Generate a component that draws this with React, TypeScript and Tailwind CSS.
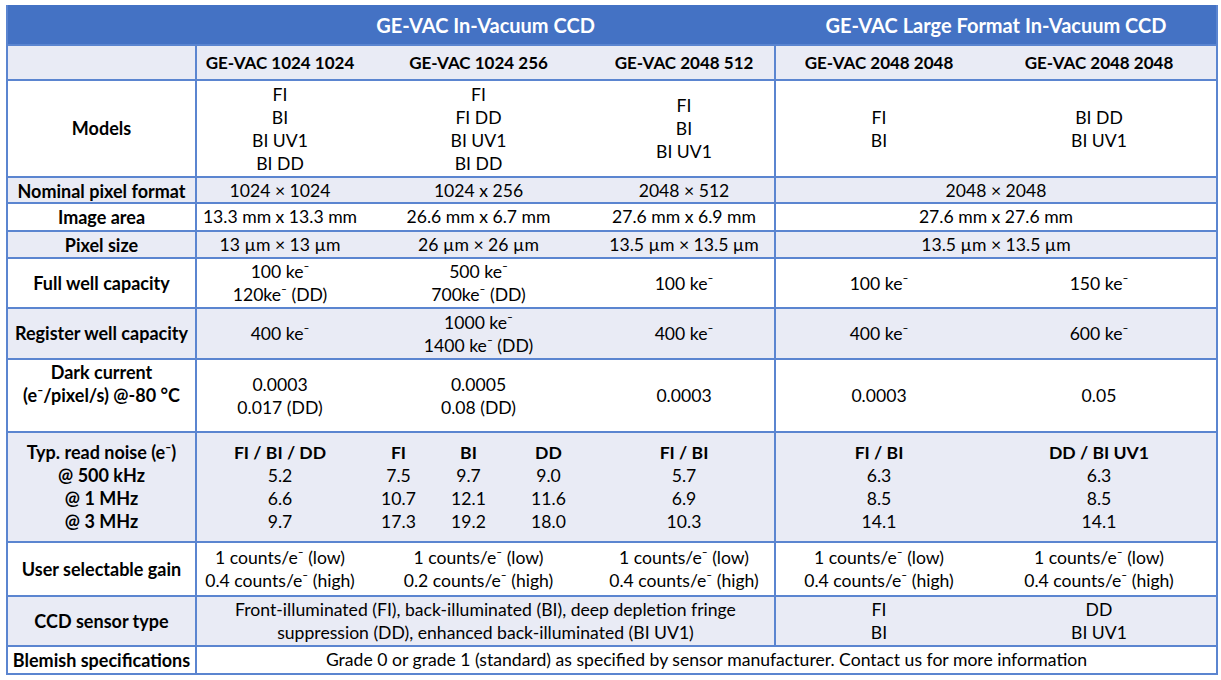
import React from "react";

const ROW =
  "grid grid-cols-[189px_166px_71px_69px_91px_182px_206px_234px] border-b-2 border-[#5b85d0]";
const CELL = "flex flex-col items-center justify-center text-center";
const LABEL =
  "flex flex-col items-center justify-center text-center font-bold text-[18px] border-r-2 border-[#5b85d0]";
const LIGHT = "bg-[#e9ebf5]";
const WHITE = "bg-white";

function M({ children }: { children: React.ReactNode }) {
  return <span>{children}</span>;
}

const E = "⁻";

function Lines({ items }: { items: React.ReactNode[] }) {
  return (
    <>
      {items.map((t, i) => (
        <div key={i} className="leading-[23px] whitespace-nowrap">
          {t}
        </div>
      ))}
    </>
  );
}

export default function App() {
  return (
    <div
      className="bg-white w-[1221px] h-[680px] pt-[5px] pl-[6px] text-black text-[17.6px]"
      style={{ fontFamily: "Lato, 'Liberation Sans', sans-serif" }}
    >
      <div className="w-[1212px] border-x-2 border-[#5b85d0]">
        {/* Header */}
        <div className={ROW + " h-[41px] bg-[#4472c4] text-white font-bold text-[20px]"}>
          <div className="border-r-2 border-[#4472c4]"></div>
          <div className={CELL + " col-span-5 border-r-2 border-[#4472c4]"}>GE-VAC In-Vacuum CCD</div>
          <div className={CELL + " col-span-2"}>GE-VAC Large Format In-Vacuum CCD</div>
        </div>
        {/* Subheader */}
        <div className={ROW + " h-[35px] font-bold text-[17px] " + LIGHT}>
          <div className={LABEL}></div>
          <div className={CELL}>GE-VAC 1024 1024</div>
          <div className={CELL + " col-span-3"}>GE-VAC 1024 256</div>
          <div className={CELL + " border-r-2 border-[#5b85d0]"}>GE-VAC 2048 512</div>
          <div className={CELL}>GE-VAC 2048 2048</div>
          <div className={CELL}>GE-VAC 2048 2048</div>
        </div>
        {/* Models */}
        <div className={ROW + " h-[97px] " + WHITE}>
          <div className={LABEL}>Models</div>
          <div className={CELL}>
            <Lines items={["FI", "BI", "BI UV1", "BI DD"]} />
          </div>
          <div className={CELL + " col-span-3"}>
            <Lines items={["FI", "FI DD", "BI UV1", "BI DD"]} />
          </div>
          <div className={CELL + " border-r-2 border-[#5b85d0]"}>
            <Lines items={["FI", "BI", "BI UV1"]} />
          </div>
          <div className={CELL}>
            <Lines items={["FI", "BI"]} />
          </div>
          <div className={CELL}>
            <Lines items={["BI DD", "BI UV1"]} />
          </div>
        </div>
        {/* Nominal pixel format */}
        <div className={ROW + " h-[26px] " + LIGHT}>
          <div className={LABEL}>Nominal pixel format</div>
          <div className={CELL}>1024 × 1024</div>
          <div className={CELL + " col-span-3"}>1024 x 256</div>
          <div className={CELL + " border-r-2 border-[#5b85d0]"}>2048 × 512</div>
          <div className={CELL + " col-span-2"}>2048 × 2048</div>
        </div>
        {/* Image area */}
        <div className={ROW + " h-[28px] " + WHITE}>
          <div className={LABEL}>Image area</div>
          <div className={CELL}>13.3 mm x 13.3 mm</div>
          <div className={CELL + " col-span-3"}>26.6 mm x 6.7 mm</div>
          <div className={CELL + " border-r-2 border-[#5b85d0]"}>27.6 mm x 6.9 mm</div>
          <div className={CELL + " col-span-2"}>27.6 mm x 27.6 mm</div>
        </div>
        {/* Pixel size */}
        <div className={ROW + " h-[27px] " + LIGHT}>
          <div className={LABEL}>Pixel size</div>
          <div className={CELL}>13 µm × 13 µm</div>
          <div className={CELL + " col-span-3"}>26 µm × 26 µm</div>
          <div className={CELL + " border-r-2 border-[#5b85d0]"}>13.5 µm × 13.5 µm</div>
          <div className={CELL + " col-span-2"}>13.5 µm × 13.5 µm</div>
        </div>
        {/* Full well capacity */}
        <div className={ROW + " h-[50px] " + WHITE}>
          <div className={LABEL}>Full well capacity</div>
          <div className={CELL}>
            <Lines items={[<M>100 ke{E}</M>, <M>120ke{E} (DD)</M>]} />
          </div>
          <div className={CELL + " col-span-3"}>
            <Lines items={[<M>500 ke{E}</M>, <M>700ke{E} (DD)</M>]} />
          </div>
          <div className={CELL + " border-r-2 border-[#5b85d0]"}>
            <Lines items={[<M>100 ke{E}</M>]} />
          </div>
          <div className={CELL}>
            <Lines items={[<M>100 ke{E}</M>]} />
          </div>
          <div className={CELL}>
            <Lines items={[<M>150 ke{E}</M>]} />
          </div>
        </div>
        {/* Register well capacity */}
        <div className={ROW + " h-[51px] " + LIGHT}>
          <div className={LABEL}>Register well capacity</div>
          <div className={CELL}>
            <Lines items={[<M>400 ke{E}</M>]} />
          </div>
          <div className={CELL + " col-span-3"}>
            <Lines items={[<M>1000 ke{E}</M>, <M>1400 ke{E} (DD)</M>]} />
          </div>
          <div className={CELL + " border-r-2 border-[#5b85d0]"}>
            <Lines items={[<M>400 ke{E}</M>]} />
          </div>
          <div className={CELL}>
            <Lines items={[<M>400 ke{E}</M>]} />
          </div>
          <div className={CELL}>
            <Lines items={[<M>600 ke{E}</M>]} />
          </div>
        </div>
        {/* Dark current */}
        <div className={ROW + " h-[73px] " + WHITE}>
          <div className="flex flex-col items-center justify-start pt-[1px] text-center font-bold text-[18px] border-r-2 border-[#5b85d0]">
            <Lines items={["Dark current", <M>(e{E}/pixel/s) @-80 °C</M>]} />
          </div>
          <div className={CELL}>
            <Lines items={["0.0003", "0.017 (DD)"]} />
          </div>
          <div className={CELL + " col-span-3"}>
            <Lines items={["0.0005", "0.08 (DD)"]} />
          </div>
          <div className={CELL + " border-r-2 border-[#5b85d0]"}>
            <Lines items={["0.0003"]} />
          </div>
          <div className={CELL}>
            <Lines items={["0.0003"]} />
          </div>
          <div className={CELL}>
            <Lines items={["0.05"]} />
          </div>
        </div>
        {/* Read noise */}
        <div className={ROW + " h-[110px] " + LIGHT}>
          <div className={LABEL}>
            <Lines items={[<M>Typ. read noise (e{E})</M>, "@ 500 kHz", "@ 1 MHz", "@ 3 MHz"]} />
          </div>
          <div className={CELL}>
            <Lines items={[<b>FI / BI / DD</b>, "5.2", "6.6", "9.7"]} />
          </div>
          <div className={CELL}>
            <Lines items={[<b>FI</b>, "7.5", "10.7", "17.3"]} />
          </div>
          <div className={CELL}>
            <Lines items={[<b>BI</b>, "9.7", "12.1", "19.2"]} />
          </div>
          <div className={CELL}>
            <Lines items={[<b>DD</b>, "9.0", "11.6", "18.0"]} />
          </div>
          <div className={CELL + " border-r-2 border-[#5b85d0]"}>
            <Lines items={[<b>FI / BI</b>, "5.7", "6.9", "10.3"]} />
          </div>
          <div className={CELL}>
            <Lines items={[<b>FI / BI</b>, "6.3", "8.5", "14.1"]} />
          </div>
          <div className={CELL}>
            <Lines items={[<b>DD / BI UV1</b>, "6.3", "8.5", "14.1"]} />
          </div>
        </div>
        {/* Gain */}
        <div className={ROW + " h-[54px] " + WHITE}>
          <div className={LABEL}>User selectable gain</div>
          <div className={CELL}>
            <Lines items={[<M>1 counts/e{E} (low)</M>, <M>0.4 counts/e{E} (high)</M>]} />
          </div>
          <div className={CELL + " col-span-3"}>
            <Lines items={[<M>1 counts/e{E} (low)</M>, <M>0.2 counts/e{E} (high)</M>]} />
          </div>
          <div className={CELL + " border-r-2 border-[#5b85d0]"}>
            <Lines items={[<M>1 counts/e{E} (low)</M>, <M>0.4 counts/e{E} (high)</M>]} />
          </div>
          <div className={CELL}>
            <Lines items={[<M>1 counts/e{E} (low)</M>, <M>0.4 counts/e{E} (high)</M>]} />
          </div>
          <div className={CELL}>
            <Lines items={[<M>1 counts/e{E} (low)</M>, <M>0.4 counts/e{E} (high)</M>]} />
          </div>
        </div>
        {/* CCD sensor type */}
        <div className={ROW + " h-[50px] " + LIGHT}>
          <div className={LABEL}>CCD sensor type</div>
          <div className={CELL + " col-span-5 border-r-2 border-[#5b85d0]"}>
            <Lines
              items={[
                "Front-illuminated (FI), back-illuminated (BI), deep depletion fringe",
                "suppression (DD), enhanced back-illuminated (BI UV1)",
              ]}
            />
          </div>
          <div className={CELL}>
            <Lines items={["FI", "BI"]} />
          </div>
          <div className={CELL}>
            <Lines items={["DD", "BI UV1"]} />
          </div>
        </div>
        {/* Blemish */}
        <div className={ROW + " h-[28px] " + WHITE}>
          <div className={LABEL}>Blemish specifications</div>
          <div className={CELL + " col-span-7"}>
            Grade 0 or grade 1 (standard) as specified by sensor manufacturer. Contact us for more information
          </div>
        </div>
      </div>
    </div>
  );
}
